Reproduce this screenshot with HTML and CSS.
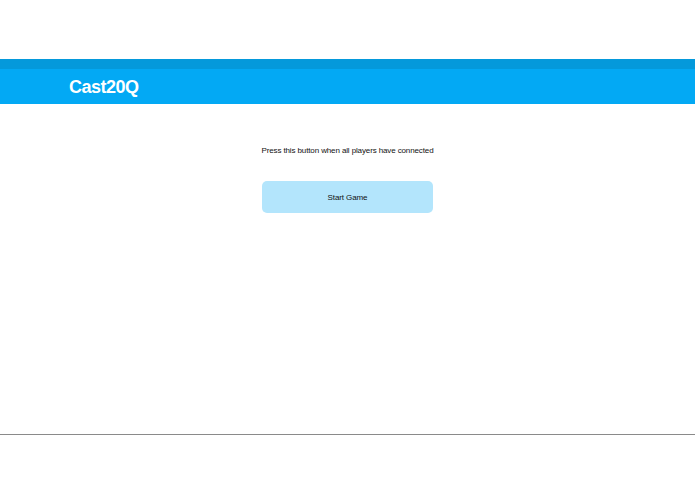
FILE: index.html
```html
<!DOCTYPE html>
<html>
<head>
<meta charset="utf-8">
<link rel="stylesheet" href="styles.css">
</head>
<body>
<div class="page">
  <header class="bar">
    <div class="title">Cast20Q</div>
  </header>
  <main class="content">
    <p class="hint">Press this button when all players have connected</p>
    <button class="start">Start Game</button>
  </main>
</div>
</body>
</html>
```
FILE: styles.css
```css
html, body {
  margin: 0;
  padding: 0;
  background: #ffffff;
  font-family: "Liberation Sans", Arial, sans-serif;
}
.page {
  height: 435px;
  border-bottom: 1px solid #8a8a8a;
  padding-top: 59px;
  box-sizing: border-box;
}
.bar {
  border-top: 10px solid #0499db;
  background: #03a9f4;
  height: 35px;
  display: flex;
  align-items: center;
  padding-left: 69px;
}
.title {
  color: #ffffff;
  font-size: 18px;
  font-weight: bold;
  letter-spacing: -0.5px;
  margin-top: 2px;
}
.content {
  display: flex;
  flex-direction: column;
  align-items: center;
  padding-top: 42px;
}
.hint {
  margin: 0;
  font-size: 8px;
  color: #111;
  line-height: 10px;
  letter-spacing: -0.12px;
}
.start {
  margin-top: 25px;
  width: 171px;
  height: 32px;
  border: none;
  border-radius: 5px;
  background: #b3e5fc;
  font-family: "Liberation Sans", Arial, sans-serif;
  font-size: 8px;
  letter-spacing: -0.1px;
  color: #111;
}
```
